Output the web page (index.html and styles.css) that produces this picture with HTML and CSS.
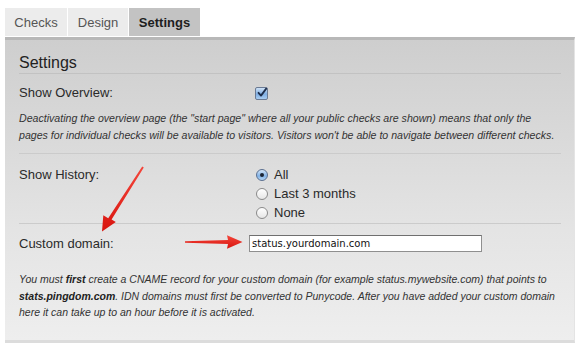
FILE: index.html
```html
<!DOCTYPE html>
<html>
<head>
<meta charset="utf-8">
<link rel="stylesheet" href="styles.css">
</head>
<body>
<div class="page">
  <nav class="tabs">
    <span class="tab">Checks</span>
    <span class="tab">Design</span>
    <span class="tab active">Settings</span>
  </nav>
  <section class="panel">
    <h2 class="heading">Settings</h2>
    <div class="section">
      <div class="row row-overview">
        <span class="label">Show Overview:</span>
        <span class="checkbox"><svg width="12" height="12" viewBox="0 0 12 12"><path d="M2.5 5.8 L5 8.6 L10.2 1.6" fill="none" stroke="#1d2d4a" stroke-width="1.8" stroke-linecap="round" stroke-linejoin="round"/></svg></span>
      </div>
      <p class="desc">Deactivating the overview page (the "start page" where all your public checks are shown) means that only the<br>pages for individual checks will be available to visitors. Visitors won't be able to navigate between different checks.</p>
    </div>
    <div class="section section-history">
      <div class="row">
        <span class="label">Show History:</span>
        <div class="radios">
          <div class="radio-row"><span class="radio checked"></span>All</div>
          <div class="radio-row"><span class="radio"></span>Last 3 months</div>
          <div class="radio-row"><span class="radio"></span>None</div>
        </div>
      </div>
    </div>
    <div class="domain">
      <div class="row row-domain">
        <span class="label">Custom domain:</span>
        <span class="input">status.yourdomain.com</span>
      </div>
      <p class="note">You must <b>first</b> create a CNAME record for your custom domain (for example status.mywebsite.com) that points to<br><b>stats.pingdom.com</b>. IDN domains must first be converted to Punycode. After you have added your custom domain<br>here it can take up to an hour before it is activated.</p>
    </div>
  </section>
  <svg class="arrows" width="580" height="351" viewBox="0 0 580 351">
    <defs>
      <linearGradient id="ar" x1="0" y1="0" x2="0" y2="1">
        <stop offset="0" stop-color="#f4463b"/>
        <stop offset="1" stop-color="#d8140e"/>
      </linearGradient>
    </defs>
    <polygon fill="url(#ar)" points="142.2,166.5 143.8,167.5 111.6,219.4 115.8,222.1 102,231.5 103.3,215.2 108.2,218.2"/>
    <polygon fill="url(#ar)" points="185,241.2 228,240 227,235.2 242.5,242 227,248.8 228,244 185,242.8"/>
  </svg>
</div>
</body>
</html>
```
FILE: styles.css
```css
html, body {
  margin: 0;
  padding: 0;
  background: #fff;
}
body {
  font-family: "Liberation Sans", Arial, sans-serif;
  color: #2a2a2a;
}
.page {
  position: relative;
  width: 580px;
  height: 351px;
  overflow: hidden;
}
.tabs {
  display: flex;
  gap: 1px;
  padding: 8px 0 0 5px;
  height: 28px;
}
.tab {
  display: flex;
  align-items: center;
  justify-content: center;
  height: 28px;
  font-size: 13px;
  color: #555;
  background: #ececec;
}
.tab:nth-child(1) { width: 62px; }
.tab:nth-child(2) { width: 60px; }
.tab.active {
  width: 71px;
  background: #c3c3c3;
  color: #1e1e1e;
  font-weight: bold;
}
.panel {
  margin: 1px 0 0 5px;
  width: 570px;
  border-top: 3px solid #b8b8b8;
  border-bottom: 3px solid #dcdcdc;
  border-right: 1px solid #e4e4e4;
  background: linear-gradient(#cecece 0px, #e4e4e4 190px, #eeeeee 300px);
  padding: 0 13px 19px 14px;
  box-sizing: border-box;
}
.heading {
  margin: 0;
  padding-top: 12px;
  font-size: 16px;
  font-weight: normal;
  line-height: 21px;
  color: #222;
  border-bottom: 1px solid #c2c2c2;
}
.section {
  border-bottom: 1px solid #cbcbcb;
}
.row {
  display: grid;
  grid-template-columns: 236px 1fr;
  align-items: start;
  font-size: 13px;
  line-height: 18px;
}
.row-overview {
  margin-top: 10px;
}
.label {
  color: #2a2a2a;
}
.checkbox {
  display: block;
  width: 11px;
  height: 11px;
  margin-top: 3px;
  border: 1px solid #6a7a93;
  border-radius: 2px;
  background: linear-gradient(#cfe2f6, #7faee3 55%, #a9cdf2);
  position: relative;
}
.checkbox svg {
  position: absolute;
  left: 0;
  top: -1px;
}
.desc {
  margin: 8px 0 0;
  padding-bottom: 9px;
  font-size: 10.6px;
  line-height: 17px;
  font-style: italic;
  white-space: nowrap;
  color: #333;
}
.section-history .row {
  margin-top: 11px;
  padding-bottom: 1px;
}
.section-history .label {
  margin-top: 1px;
}
.radios {
  display: flex;
  flex-direction: column;
}
.radio-row {
  display: flex;
  align-items: center;
  gap: 6px;
  height: 19px;
  font-size: 13px;
  color: #2a2a2a;
}
.radio {
  display: block;
  width: 10px;
  height: 10px;
  margin-left: 1px;
  border-radius: 50%;
  border: 1px solid #8a8a8a;
  background: linear-gradient(#ffffff, #e6e6e6);
  position: relative;
}
.radio.checked {
  border-color: #5a6f90;
  background: linear-gradient(#d4e6f8, #82b2e6 60%, #b3d4f4);
}
.radio.checked::after {
  content: "";
  position: absolute;
  left: 3px;
  top: 3px;
  width: 4px;
  height: 4px;
  border-radius: 50%;
  background: #1b2433;
}
.row-domain {
  margin-top: 11px;
  grid-template-columns: 230px 1fr;
}
.input {
  display: block;
  width: 233px;
  height: 17px;
  box-sizing: border-box;
  border: 1px solid #8f8f8f;
  border-top-color: #6f6f6f;
  background: #fff;
  font-family: "DejaVu Sans", sans-serif;
  font-size: 10px;
  line-height: 15px;
  padding-left: 2px;
  color: #111;
}
.note {
  margin: 18px 0 0;
  font-size: 10.5px;
  line-height: 16.5px;
  font-style: italic;
  white-space: nowrap;
  color: #333;
}
.note b {
  color: #222;
}
.arrows {
  position: absolute;
  left: 0;
  top: 0;
  pointer-events: none;
}
```
